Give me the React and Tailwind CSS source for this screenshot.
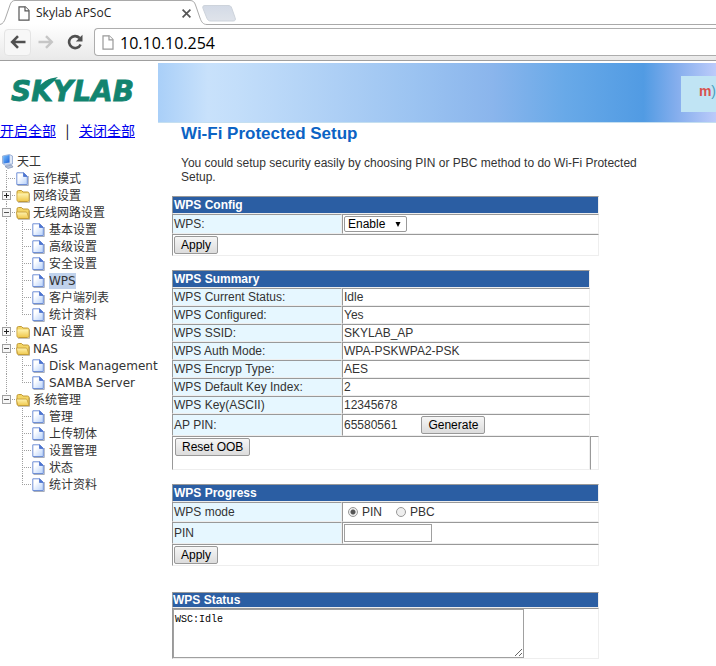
import React, { useState } from 'react';
import clsx from 'clsx';

const treeItems = [
  { label: '运作模式', icon: 'page' },
  { label: '网络设置', icon: 'folder', toggle: 'plus' },
  {
    label: '无线网路设置', icon: 'open', toggle: 'minus',
    children: ['基本设置', '高级设置', '安全设置', 'WPS', '客户端列表', '统计资料'],
  },
  { label: 'NAT 设置', icon: 'folder', toggle: 'plus' },
  { label: 'NAS', icon: 'open', toggle: 'minus', children: ['Disk Management', 'SAMBA Server'] },
  {
    label: '系统管理', icon: 'open', toggle: 'minus', last: true,
    children: ['管理', '上传轫体', '设置管理', '状态', '统计资料'],
  },
];

const summary = [
  ['WPS Current Status:', 'Idle'],
  ['WPS Configured:', 'Yes'],
  ['WPS SSID:', 'SKYLAB_AP'],
  ['WPS Auth Mode:', 'WPA-PSKWPA2-PSK'],
  ['WPS Encryp Type:', 'AES'],
  ['WPS Default Key Index:', '2'],
  ['WPS Key(ASCII)', '12345678'],
];

/* ---------- browser window ---------- */

const PageOutline = ({ className, stroke }) => (
  <svg className={className} viewBox="0 0 12 15" fill="#fff" stroke={stroke} strokeWidth="1.2">
    <path d="M1 .8h6.2L11 4.6v9.6H1z" />
    <path d="M7 .8v4h4" />
  </svg>
);

const TabStrip = () => (
  <div className="relative flex h-6 items-center bg-white">
    <svg className="absolute left-0 top-0 h-[25px] w-full" fill="none">
      <defs>
        <linearGradient id="ghostTab" x1="0" y1="0" x2="0" y2="1">
          <stop offset="0" stopColor="#d3dae6" />
          <stop offset="1" stopColor="#dfe3ea" />
        </linearGradient>
      </defs>
      <path d="M0 24.5C3 24 4.500 21 5.500 18L10 5C11 2 12.500 .5 15 .5H190C193 .5 194.500 2 195.500 5L200 18C201.500 22 203 24.500 207 24.500H2000" stroke="#a9a9a9" />
      <path d="M205 5.500H228C230 5.500 231 6 231.700 8L235 17.500C236 20 235 21 233 21H211C209 21 208 20.500 207 18.500L203 8.500C202.300 6.500 203 5.500 205 5.500Z" fill="url(#ghostTab)" stroke="#cdd3db" />
    </svg>
    <div className="relative flex w-[195px] items-center pl-[18px] pt-0.5">
      <PageOutline className="mr-[6px] h-[15px] w-3" stroke="#555" />
      <span className="flex-1 font-['Open_Sans',sans-serif] text-[12px] leading-4 text-[#222]">Skylab APSoC</span>
      <button aria-label="Close tab" className="p-1">
        <svg className="h-[9px] w-[9px]" viewBox="0 0 8 8" stroke="#555" strokeWidth="1.5">
          <path d="M.5 .5l7 7M7.500 .5l-7 7" />
        </svg>
      </button>
    </div>
  </div>
);

const Toolbar = () => (
  <div className="flex h-[37px] items-center border-b border-[#9f9f9f] bg-gradient-to-b from-white to-[#e9e9e9]">
    <button aria-label="Back" className="ml-1 flex h-[27px] w-[27px] items-center justify-center rounded-sm border border-[#e4e4e4] bg-[#f7f7f7]">
      <svg className="h-[14px] w-4" viewBox="0 0 16 14" fill="none" stroke="#505050" strokeWidth="2.600">
        <path d="M15.500 7H3M8 1.200L2.200 7L8 12.800" />
      </svg>
    </button>
    <button aria-label="Forward" className="ml-[7px] flex h-[27px] w-4 items-center justify-center">
      <svg className="h-[14px] w-4" viewBox="0 0 16 14" fill="none" stroke="#c6c6c6" strokeWidth="2.400">
        <path d="M.5 7H13M8 1.200L13.800 7L8 12.800" />
      </svg>
    </button>
    <button aria-label="Reload" className="ml-[13px] flex h-[27px] w-4 items-center justify-center">
      <svg className="h-4 w-4" viewBox="0 0 16 16" fill="none">
        <path d="M13.600 10.500A6 6 0 1 1 12.500 4" stroke="#505050" strokeWidth="2.600" />
        <path d="M15.500 .8V7.500H8.800z" fill="#505050" />
      </svg>
    </button>
    <div className="ml-[11px] flex h-7 flex-1 items-center rounded-l-sm border border-r-0 border-[#adadad] bg-white pl-[7px]">
      <PageOutline className="mr-[6px] h-[15px] w-3" stroke="#999" />
      <input
        aria-label="Address"
        defaultValue="10.10.10.254"
        className="min-w-0 flex-1 pt-0.5 font-['Open_Sans',sans-serif] text-[16px] leading-6 text-black outline-none"
      />
    </div>
  </div>
);

/* ---------- sidebar tree ---------- */

const TreeGradients = () => (
  <svg className="absolute h-0 w-0" aria-hidden="true">
    <defs>
      <linearGradient id="paper" x1="0" y1="0" x2="1" y2="1">
        <stop offset=".3" stopColor="#fff" />
        <stop offset="1" stopColor="#b5d0fa" />
      </linearGradient>
      <linearGradient id="folder" x1="0" y1="0" x2="0" y2="1">
        <stop offset="0" stopColor="#fff3b0" />
        <stop offset="1" stopColor="#f0c94e" />
      </linearGradient>
      <linearGradient id="screen" x1="0" y1="0" x2="1" y2="1">
        <stop offset="0" stopColor="#7cc4ff" />
        <stop offset="1" stopColor="#1a5fd8" />
      </linearGradient>
    </defs>
  </svg>
);

const ComputerIcon = () => (
  <svg className="h-[17px] w-4 shrink-0" viewBox="0 0 16 17">
    <path d="M2.500 3L9.500 1.500L12.500 3V11L5.500 12.500L2.500 10.500z" fill="#c3d3ee" stroke="#8fa6d0" strokeWidth=".8" />
    <path d="M3 3.300L9.500 2V9.500L3.500 10.500z" fill="url(#screen)" />
    <path d="M10 2.500L12 3.500V10.500L10 10z" fill="#dfe8f7" />
    <path d="M5 13.500L11.500 12L13 14L8 15.500z" fill="#b5c2d9" stroke="#7d8fb5" strokeWidth=".7" />
  </svg>
);

const PageIcon = () => (
  <svg className="h-[17px] w-4 shrink-0" viewBox="0 0 16 17">
    <path d="M1.500 15.500H12.300V6" fill="none" stroke="#7b8496" strokeWidth="1" opacity=".65" />
    <path d="M.8 2.800H7.500L11.300 6.500V14.500H.8z" fill="url(#paper)" stroke="#6f8fd6" />
    <path d="M7.500 2.800V6.500H11.300z" fill="#4c74cf" stroke="#4c74cf" strokeWidth=".8" />
  </svg>
);

const FolderIcon = ({ open }) => (
  <svg className="h-[17px] w-4 shrink-0" viewBox="0 0 16 17">
    <path d="M2 15.300H13.500V6.500" fill="none" stroke="#8a8168" opacity=".6" />
    <path d="M1 5Q1 3.500 2.500 3.500H5.500L7 5H11.500Q13 5 13 6.500V13Q13 14.500 11.500 14.500H2.500Q1 14.500 1 13z" fill="#f3d566" stroke="#c29a35" />
    {open ? (
      <path d="M.3 8H10Q10.800 8 11.200 9L13 14.500H2.500Q1.800 14.500 1.600 13.500z" fill="url(#folder)" stroke="#c29a35" strokeWidth=".8" />
    ) : (
      <path d="M1.500 6.500H12.500V13Q12.500 14 11.500 14H2.500Q1.500 14 1.500 13z" fill="url(#folder)" />
    )}
  </svg>
);

// Dotted guide cell: through line, elbow or blank, with an optional +/- box
const Guide = ({ line, branch, toggle }) => (
  <svg className="h-[17px] w-4 shrink-0" viewBox="0 0 16 17" fill="none" stroke="#a0a0a0" strokeDasharray="1 1" shapeRendering="crispEdges">
    {line && <path d={line === 'full' ? 'M6.500 0V17' : 'M6.500 0V9'} />}
    {branch && <path d="M8 8.500H15" />}
    {toggle && (
      <g strokeDasharray="none">
        <rect x="2.500" y="4.500" width="8" height="8" fill="#f7f7f7" stroke="#a0a0a0" />
        <path d="M4 8.500H9" stroke={toggle === 'plus' ? '#222' : '#555'} />
        {toggle === 'plus' && <path d="M6.500 6V11" stroke="#222" />}
      </g>
    )}
  </svg>
);

const TreeLabel = ({ children, active, className }) => (
  <a href="#" className={clsx('whitespace-nowrap leading-4', active && 'bg-[#c0d2ec]', className)}>{children}</a>
);

const Tree = () => (
  <ul className="mt-[13px] font-['DejaVu_Sans','Noto_Sans_CJK_SC',sans-serif] text-[12px] text-[#333]">
    <li className="flex h-[17px] items-center">
      <ComputerIcon />
      <TreeLabel className="ml-px">天工</TreeLabel>
    </li>
    {treeItems.map((item) => (
      <li key={item.label}>
        <div className="flex h-[17px] items-center">
          <Guide line={item.last ? 'half' : 'full'} branch toggle={item.toggle} />
          {item.icon === 'page' ? <PageIcon /> : <FolderIcon open={item.icon === 'open'} />}
          <TreeLabel className="ml-px">{item.label}</TreeLabel>
        </div>
        {item.children && (
          <ul>
            {item.children.map((child, i) => (
              <li key={child} className="flex h-[17px] items-center">
                <Guide line={item.last ? null : 'full'} />
                <Guide line={i === item.children.length - 1 ? 'half' : 'full'} branch />
                <PageIcon />
                <TreeLabel className="ml-px" active={child === 'WPS'}>{child}</TreeLabel>
              </li>
            ))}
          </ul>
        )}
      </li>
    ))}
  </ul>
);

const Sidebar = () => (
  <aside className="w-[158px] shrink-0">
    <TreeGradients />
    <svg className="h-[57px] w-full" viewBox="0 0 158 57" role="img" aria-label="SKYLAB">
      <text x="11" y="38" fill="#12846f" stroke="#12846f" strokeWidth=".8" className="font-['DejaVu_Sans',sans-serif] text-[28px] font-bold italic">SKYLAB</text>
      <path d="M37 27Q42 16 58 14L50 21Q44 23 40 28z" fill="#12846f" />
    </svg>
    <div className="flex items-center font-['Noto_Sans_CJK_SC',sans-serif] text-[14px] leading-5">
      <a href="#" className="text-[#0000ee] underline">开启全部</a>
      <span className="w-[23px] text-center text-black">|</span>
      <a href="#" className="text-[#0000ee] underline">关闭全部</a>
    </div>
    <Tree />
  </aside>
);

/* ---------- settings forms ---------- */

const edges = 'border border-b-[#eee] border-l-[#999] border-r-[#eee] border-t-[#999]';
const cell = clsx(edges, 'p-px text-left align-middle');

const Button = ({ children, className }) => (
  <button
    type="button"
    className={clsx(
      'block h-[18px] rounded-[2px] border border-[#999] bg-gradient-to-b from-[#f6f6f6] to-[#dcdcdc] px-[6px] text-[12px] leading-4 text-black',
      className
    )}
  >
    {children}
  </button>
);

const Section = ({ title, span = 2, thin, className, children }) => (
  <table className={clsx('w-full max-w-[427px] table-fixed border-separate border-spacing-0 leading-[14px]', className)}>
    <colgroup>
      <col className="w-[170px]" />
      <col />
      {span === 3 && <col className="w-[9px]" />}
    </colgroup>
    <thead>
      <tr className={thin ? 'h-4' : 'h-[18px]'}>
        <th colSpan={2} className={clsx(edges, 'bg-[#2b5ea3] text-left font-bold text-white', thin ? 'p-0' : 'p-px')}>{title}</th>
      </tr>
    </thead>
    <tbody>{children}</tbody>
  </table>
);

const Label = ({ htmlFor, children }) => (
  <th scope="row" className={clsx(cell, 'bg-[#e6f7ff] font-normal')}>
    {htmlFor ? <label htmlFor={htmlFor}>{children}</label> : children}
  </th>
);

const Radio = ({ value, mode, onChange }) => (
  <label className="flex items-center gap-1">
    <input
      type="radio"
      name="wpsMode"
      value={value}
      checked={mode === value}
      onChange={() => onChange(value)}
      className="h-[10px] w-[10px] appearance-none rounded-full border border-[#999] bg-[#eee] checked:bg-[radial-gradient(circle,#555_0,#555_2px,#eee_3px)]"
    />
    {value}
  </label>
);

const WpsPage = () => {
  const [mode, setMode] = useState('PIN');

  return (
    <main className="min-w-0 flex-1 pb-2 font-['Liberation_Sans',Arial,sans-serif] text-[12px] text-[#333]">
      <div className="flex h-[60px] items-center justify-end border-b border-[#c5dff0] bg-[linear-gradient(to_right,#a9cff8_0%,#c8e1fb_9%,#c3defa_14%,#adcff5_32%,#9bc3f1_46%,#8ab5ec_60%,#68a9e8_73%,#519be3_87%,#85aeed_93%,#bccbfa_100%)]">
        <div className="mt-0.5 flex h-9 w-[35px] items-center justify-end overflow-hidden bg-[#c0e4f4] pb-1 text-[14px] font-bold text-[#d9534f]">
          m<span className="font-normal text-[#4a9dbb]">)</span>
        </div>
      </div>

      <h1 className="ml-[23px] mt-px text-[17px] font-bold leading-5 text-[#0b63c4]">Wi-Fi Protected Setup</h1>
      <p className="ml-[23px] mt-3 max-w-[480px] leading-[14px]">
        You could setup security easily by choosing PIN or PBC method to do Wi-Fi Protected Setup.
      </p>

      <div className="ml-[14px] mt-3">
        <Section title="WPS Config">
          <tr className="h-5">
            <Label htmlFor="wps">WPS:</Label>
            <td className={cell}>
              <div className="relative w-[63px]">
                <select id="wps" className="block h-4 w-full appearance-none rounded-[2px] border border-[#999] bg-white pl-[3px] text-[12px] leading-[14px] text-black">
                  <option>Enable</option>
                  <option>Disable</option>
                </select>
                <svg className="pointer-events-none absolute right-[6px] top-[6px] h-[5px] w-[6px]" viewBox="0 0 6 5">
                  <path d="M.5 0H5.500L3 5z" fill="#000" />
                </svg>
              </div>
            </td>
          </tr>
          <tr className="h-[22px]">
            <td colSpan={2} className={cell}>
              <Button>Apply</Button>
            </td>
          </tr>
        </Section>

        <Section title="WPS Summary" span={3} className="mt-[14px]">
          {summary.map(([name, value]) => (
            <tr key={name} className="h-[18px]">
              <Label>{name}</Label>
              <td className={cell}>{value}</td>
            </tr>
          ))}
          <tr className="h-[22px]">
            <Label>AP PIN:</Label>
            <td className={cell}>
              <div className="flex items-center gap-6">
                65580561
                <Button>Generate</Button>
              </div>
            </td>
          </tr>
          <tr className="h-[34px]">
            <td colSpan={2} className={clsx(edges, 'px-0.5 align-top')}>
              <Button className="mt-px">Reset OOB</Button>
            </td>
            <td className={edges} />
          </tr>
        </Section>

        <Section title="WPS Progress" className="mt-[14px]">
          <tr className="h-5">
            <Label>WPS mode</Label>
            <td className={cell}>
              <div className="flex gap-[14px] pl-1">
                <Radio value="PIN" mode={mode} onChange={setMode} />
                <Radio value="PBC" mode={mode} onChange={setMode} />
              </div>
            </td>
          </tr>
          <tr className="h-[22px]">
            <Label htmlFor="pin">PIN</Label>
            <td className={cell}>
              <input id="pin" type="text" className="block h-[18px] w-[88px] border border-[#a0a0a0] bg-white px-0.5 text-black" />
            </td>
          </tr>
          <tr className="h-[22px]">
            <td colSpan={2} className={cell}>
              <Button>Apply</Button>
            </td>
          </tr>
        </Section>

        <Section title="WPS Status" thin className="mt-[26px]">
          <tr>
            <td colSpan={2} className={clsx(edges, 'p-0')}>
              <textarea
                aria-label="WPS Status"
                defaultValue="WSC:Idle"
                className="block h-[49px] w-[351px] max-w-full border border-[#a0a0a0] bg-white px-px py-1 font-['Liberation_Mono','Noto_Sans_CJK_SC',monospace] text-[10px] leading-3 text-black"
              />
            </td>
          </tr>
        </Section>
      </div>
    </main>
  );
};

const App = () => (
  <div className="min-h-screen overflow-x-hidden bg-white">
    <TabStrip />
    <Toolbar />
    <div className="mt-0.5 flex">
      <Sidebar />
      <WpsPage />
    </div>
  </div>
);

export default App;
